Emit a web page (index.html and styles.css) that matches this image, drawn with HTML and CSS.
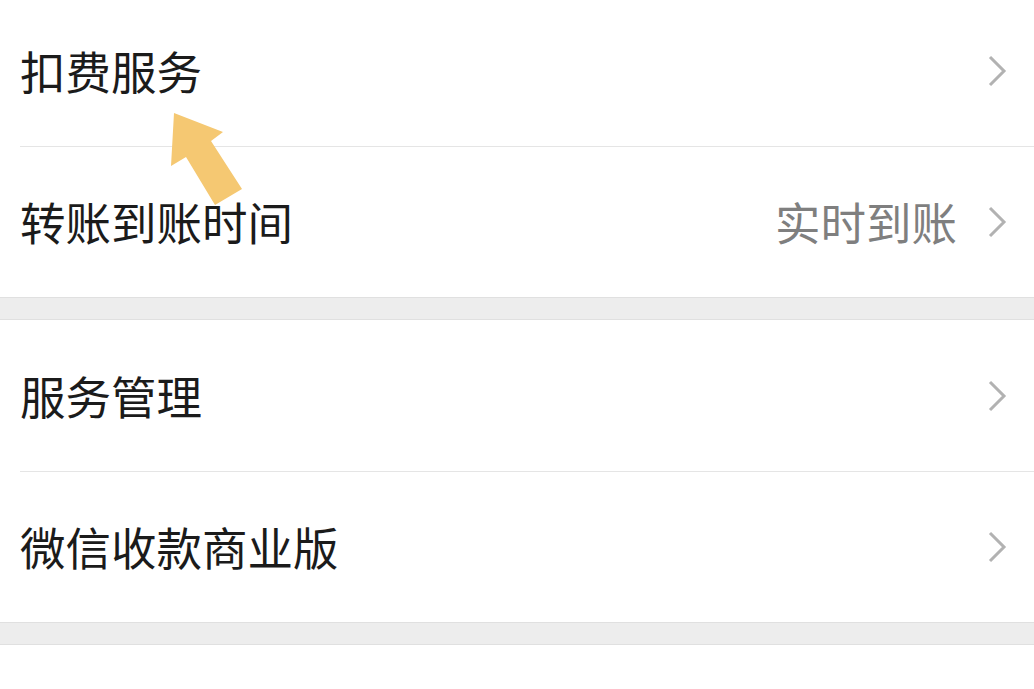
FILE: index.html
```html
<!DOCTYPE html>
<html lang="zh-CN">
<head>
  <meta charset="UTF-8">
  <meta name="viewport" content="width=device-width, initial-scale=1.0">
  <title>支付设置</title>
  <link rel="stylesheet" href="styles.css">
</head>
<body>
  <div class="page">
    <div class="group">
      <div class="cell">
        <span class="cell-title">扣费服务</span>
        <svg class="chevron" viewBox="0 0 20 34"><polyline points="3,3 17,17 3,31"/></svg>
      </div>
      <div class="cell">
        <span class="cell-title">转账到账时间</span>
        <span class="cell-value">实时到账</span>
        <svg class="chevron" viewBox="0 0 20 34"><polyline points="3,3 17,17 3,31"/></svg>
      </div>
    </div>

    <div class="gap"></div>

    <div class="group">
      <div class="cell">
        <span class="cell-title">服务管理</span>
        <svg class="chevron" viewBox="0 0 20 34"><polyline points="3,3 17,17 3,31"/></svg>
      </div>
      <div class="cell">
        <span class="cell-title">微信收款商业版</span>
        <svg class="chevron" viewBox="0 0 20 34"><polyline points="3,3 17,17 3,31"/></svg>
      </div>
    </div>

    <div class="gap"></div>

    <div class="group">
      <div class="cell"></div>
    </div>

    <!-- highlight arrow pointing at the first item -->
    <svg class="pointer" viewBox="0 0 1034 689">
      <polygon points="174,113 223,132 211,141 242,189 215,205 186,157 171,166"/>
    </svg>
  </div>
</body>
</html>
```

FILE: styles.css
```css
* {
  margin: 0;
  padding: 0;
  box-sizing: border-box;
}

body {
  font-family: "Noto Sans CJK SC", "Noto Sans", sans-serif;
  background-color: #ffffff;
  color: #1b1b1b;
  height: 100vh;
  overflow: hidden;
}

.page {
  position: relative;
  margin-top: -5px;
}

.group {
  background: #ffffff;
}

.cell {
  display: flex;
  align-items: center;
  height: 151px;
  padding: 0 27px 0 20px;
  position: relative;
}

.cell + .cell::before {
  content: "";
  position: absolute;
  top: 0;
  left: 20px;
  right: 0;
  border-top: 1px solid #e5e5e5;
}

.cell-title {
  flex: 1;
  font-size: 45.5px;
  line-height: 1;
}

.cell-value {
  font-size: 45.5px;
  line-height: 1;
  color: #7f7f7f;
  margin-right: 30px;
}

.chevron {
  width: 20px;
  height: 34px;
  fill: none;
  stroke: #b2b2b2;
  stroke-width: 3;
}

.gap {
  height: 23px;
  background: #ededed;
  border-top: 1px solid #e0e0e0;
  border-bottom: 1px solid #e0e0e0;
}

.pointer {
  position: absolute;
  top: 5px;
  left: 0;
  width: 1034px;
  height: 689px;
  fill: #f5c872;
  pointer-events: none;
}
```
